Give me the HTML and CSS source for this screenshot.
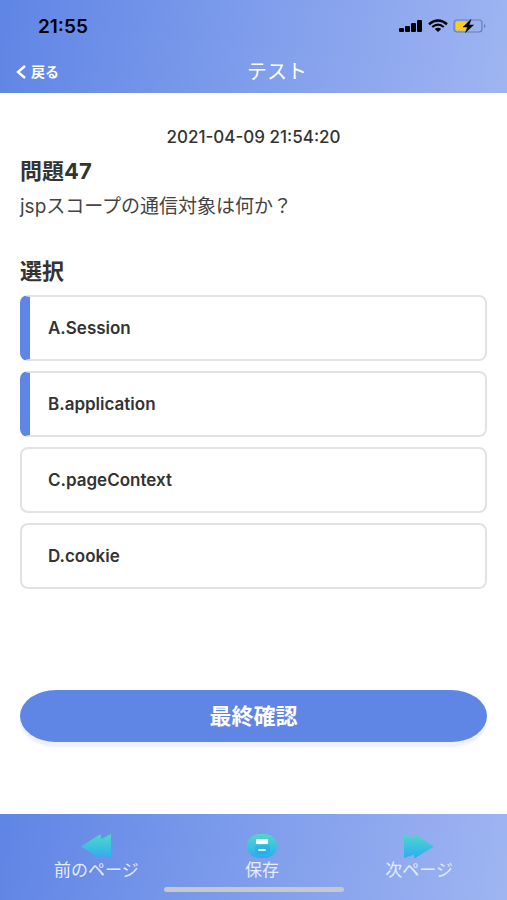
FILE: index.html
```html
<!DOCTYPE html>
<html lang="ja">
<head>
    <meta charset="UTF-8">
    <meta name="viewport" content="width=device-width, initial-scale=1.0">
    <title>テスト</title>
    <link rel="stylesheet" href="styles.css">
</head>
<body>
    <header class="header">
        <!-- Phone status bar -->
        <div class="status-bar">
            <span class="clock">21:55</span>
            <div class="status-icons">
                <svg width="24" height="14" viewBox="0 0 24 14">
                    <rect x="0" y="9" width="5" height="4" rx="1"/>
                    <rect x="6" y="7" width="5" height="6" rx="1"/>
                    <rect x="12" y="4" width="5" height="9" rx="1"/>
                    <rect x="18" y="1" width="5" height="12" rx="1"/>
                </svg>
                <svg width="20" height="14" viewBox="0 0 20 14">
                    <path d="M1 5.2 Q10 -2.2 19 5.2" fill="none" stroke="#000" stroke-width="2.4"/>
                    <path d="M4.2 8 Q10 3.2 15.8 8" fill="none" stroke="#000" stroke-width="2.2"/>
                    <path d="M6.8 10 Q10 7.6 13.2 10 L10 13 Z"/>
                </svg>
                <svg width="34" height="14" viewBox="0 0 34 14">
                    <rect x="1" y="1" width="28" height="12" rx="3" fill="none" stroke="#6d7cae" stroke-width="1.2"/>
                    <path d="M31 5 Q34 7 31 9 Z" fill="#6d7cae"/>
                    <rect x="3" y="2.5" width="11" height="9" rx="1.5" fill="#fccf1c"/>
                    <path d="M18 0.5 L10 8 H14.5 L12.5 13.5 L20.5 6 H16 Z" stroke="#000" stroke-width="0.5"/>
                </svg>
            </div>
        </div>
        <nav class="nav-bar">
            <a class="back" href="#">
                <svg width="10" height="14" viewBox="0 0 10 14">
                    <path d="M9 1 L2 7 L9 13" fill="none" stroke="#fff" stroke-width="2.4"/>
                </svg>
                戻る
            </a>
            <h1 class="title">テスト</h1>
        </nav>
    </header>

    <main class="content">
        <time class="date">2021-04-09 21:54:20</time>
        <h2 class="heading">問題47</h2>
        <p class="question">jspスコープの通信対象は何か？</p>

        <form class="answer-form">
            <h2 class="heading">選択</h2>
            <div class="options">
                <label class="option"><input type="checkbox" name="answer" value="A" checked>A.Session</label>
                <label class="option"><input type="checkbox" name="answer" value="B" checked>B.application</label>
                <label class="option"><input type="checkbox" name="answer" value="C">C.pageContext</label>
                <label class="option"><input type="checkbox" name="answer" value="D">D.cookie</label>
            </div>
            <button class="confirm" type="button">最終確認</button>
        </form>
    </main>

    <footer class="footer">
        <button class="tab" type="button">
            <svg width="30" height="24" viewBox="0 0 30 24">
                <defs>
                    <linearGradient id="aqua" x1="0" y1="0" x2="0" y2="1">
                        <stop offset="0" stop-color="#50d8c8"/>
                        <stop offset="1" stop-color="#2cacf4"/>
                    </linearGradient>
                </defs>
                <path d="M0 12.5 L18 1 L20 0.5 V5 L30 0 V24 L20 20.5 V24.5 L18 23.5 Z" fill="url(#aqua)"/>
            </svg>
            前のページ
        </button>
        <button class="tab" type="button">
            <svg width="30" height="24" viewBox="0 0 30 24">
                <rect x="0" y="0" width="30" height="24" rx="13" ry="11" fill="url(#aqua)"/>
                <rect x="8" y="11" width="15" height="9" rx="3" fill="#1ba2e8" opacity="0.4"/>
                <rect x="9" y="5" width="12" height="5" rx="1" fill="#fff"/>
                <rect x="11" y="15" width="8" height="2" rx="1" fill="#d8f4ff"/>
            </svg>
            保存
        </button>
        <button class="tab" type="button">
            <svg width="30" height="24" viewBox="0 0 30 24">
                <path d="M30 12.5 L12 1 L10 0.5 V5 L0 0 V24 L10 20.5 V24.5 L12 23.5 Z" fill="url(#aqua)"/>
            </svg>
            次ページ
        </button>
        <div class="home-indicator"></div>
    </footer>
</body>
</html>
```

FILE: styles.css
```css
* {
    box-sizing: border-box;
}

body {
    margin: 0;
    min-height: 100vh;
    display: flex;
    flex-direction: column;
    font-family: Inter, "Noto Sans CJK JP", sans-serif;
    color: #333;
    background-color: #fff;
}

h1, h2, p {
    margin: 0;
}

/* Header */
.header,
.footer {
    background: linear-gradient(100deg, #5f85e5, #9fb5f2);
}

.header {
    color: #fff;
}

.status-bar {
    display: flex;
    justify-content: space-between;
    align-items: center;
    height: 52px;
    padding: 0 20px 0 38px;
    color: #000;
}

.clock {
    font-size: 19px;
    font-weight: 600;
}

.status-icons {
    display: flex;
    align-items: center;
    gap: 5px;
}

.nav-bar {
    display: flex;
    align-items: center;
    height: 41px;
    padding: 0 12px 2px 16px;
}

.back {
    display: flex;
    align-items: center;
    gap: 5px;
    font-size: 14px;
    font-weight: 700;
    line-height: 20px;
    color: #fff;
    text-decoration: none;
}

.title {
    flex: 1;
    font-size: 20px;
    font-weight: 400;
    line-height: 28px;
    text-align: center;
}

/* Question */
.content {
    flex: 1;
    display: flex;
    flex-direction: column;
    padding: 32px 20px;
}

.date {
    margin-bottom: 8px;
    font-size: 17px;
    font-weight: 500;
    line-height: 24px;
    text-align: center;
}

.heading {
    font-size: 22px;
    font-weight: 700;
    line-height: 28px;
}

.question {
    margin: 8px 0 36px;
    font-size: 19px;
    line-height: 28px;
    color: #444;
}

/* Answers */
.options {
    display: flex;
    flex-direction: column;
    gap: 10px;
    margin: 10px 0 101px;
}

.option {
    display: flex;
    align-items: center;
    height: 66px;
    padding-left: 26px;
    border: 2px solid #e2e2e2;
    border-radius: 8px;
    font-size: 17px;
    font-weight: 600;
    cursor: pointer;
}

.option input {
    appearance: none;
    width: 0;
    height: 0;
    margin: 0;
}

.option:has(input:checked) {
    padding-left: 18px;
    border-left: 10px solid #5f85e5;
}

.confirm {
    display: block;
    width: 100%;
    height: 52px;
    padding: 0 0 4px;
    border: none;
    border-radius: 36px / 26px;
    background-color: #5f85e5;
    box-shadow: 0 5px 2px #eef1fd;
    color: #fff;
    font-family: inherit;
    font-size: 22px;
    font-weight: 700;
    cursor: pointer;
}

/* Bottom tabs */
.footer {
    position: relative;
    display: flex;
    justify-content: space-between;
    padding: 20px 54px 18px;
}

.tab {
    display: flex;
    flex-direction: column;
    align-items: center;
    padding: 0;
    border: none;
    background: none;
    color: #e6ecff;
    font-family: inherit;
    font-size: 17px;
    line-height: 24px;
    cursor: pointer;
}

.home-indicator {
    position: absolute;
    bottom: 8px;
    left: 50%;
    width: 180px;
    height: 5px;
    margin-left: -90px;
    border-radius: 3px;
    background-color: #c8c8cc;
}
```
